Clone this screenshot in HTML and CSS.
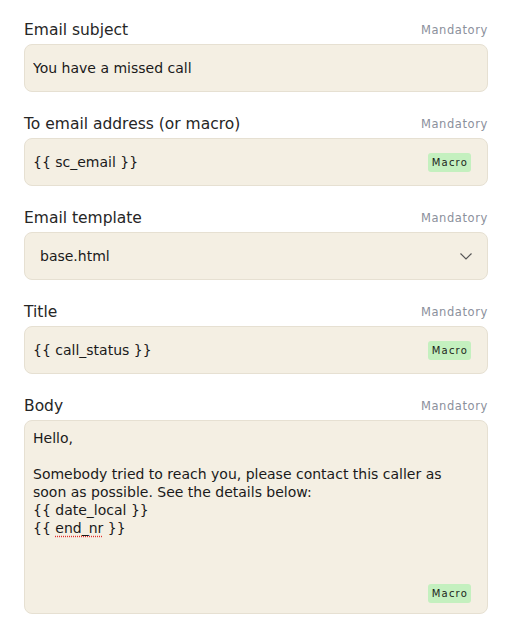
FILE: index.html
```html
<!DOCTYPE html>
<html lang="en">
  <head>
    <meta charset="UTF-8" />
    <meta name="viewport" content="width=device-width, initial-scale=1.0" />
    <title>Email notification</title>
    <link rel="stylesheet" href="styles.css">
  </head>
  <body>
    <form class="email-form">
      <div class="field">
        <div class="field-head">
          <label for="subject">Email subject</label>
          <span class="req">Mandatory</span>
        </div>
        <div class="box">
          <input id="subject" type="text" value="You have a missed call" />
        </div>
      </div>

      <div class="field">
        <div class="field-head">
          <label for="toAddr">To email address (or macro)</label>
          <span class="req">Mandatory</span>
        </div>
        <div class="box">
          <input id="toAddr" type="text" value="{{ sc_email }}" />
          <span class="macro">Macro</span>
        </div>
      </div>

      <div class="field">
        <div class="field-head">
          <label for="template">Email template</label>
          <span class="req">Mandatory</span>
        </div>
        <div class="box select-box">
          <select id="template">
            <option>base.html</option>
          </select>
          <svg class="chevron" width="14" height="14" viewBox="0 0 14 14">
            <path d="M1.5 4.5 L7 10 L12.5 4.5" fill="none" stroke="#555" stroke-width="1.2" />
          </svg>
        </div>
      </div>

      <div class="field">
        <div class="field-head">
          <label for="title">Title</label>
          <span class="req">Mandatory</span>
        </div>
        <div class="box">
          <input id="title" type="text" value="{{ call_status }}" />
          <span class="macro">Macro</span>
        </div>
      </div>

      <div class="field">
        <div class="field-head">
          <label for="body">Body</label>
          <span class="req">Mandatory</span>
        </div>
        <div class="box body-box">
          <div class="body-text" id="body">Hello,<br><br>Somebody tried to reach you, please contact this caller as soon as possible. See the details below:<br>{{ date_local }}<br>{{ <span class="typo">end_nr</span> }}</div>
          <span class="macro">Macro</span>
        </div>
      </div>
    </form>
  </body>
</html>
```

FILE: styles.css
```css
body {
  margin: 0;
  background: #fff;
  color: #1a1a1a;
  font-family: "DejaVu Sans", sans-serif;
}
.email-form {
  padding: 18px 32px 0 24px;
  display: flex;
  flex-direction: column;
  gap: 20px;
}
.field-head {
  display: flex;
  justify-content: space-between;
  align-items: center;
  height: 24px;
  margin-bottom: 2px;
}
.field-head label {
  font-size: 15.5px;
  color: #262626;
}
.req {
  font-size: 11.5px;
  color: #8b909c;
  letter-spacing: 0.6px;
}
.box {
  display: flex;
  align-items: center;
  height: 48px;
  box-sizing: border-box;
  background: #f4efe3;
  border: 1px solid #e6e0d2;
  border-radius: 8px;
  padding: 0 16px 0 8px;
}
.box input,
.box select {
  flex: 1;
  border: none;
  background: transparent;
  font: inherit;
  font-size: 14px;
  color: #1a1a1a;
  outline: none;
  padding: 0;
}
.select-box {
  padding: 0 14px 0 15px;
}
.select-box select {
  appearance: none;
  -webkit-appearance: none;
}
.macro {
  background: #c4f0bf;
  color: #1c261b;
  font-size: 10px;
  letter-spacing: 1.2px;
  padding: 3px 3px 2px 4px;
  border-radius: 3px;
  line-height: 14px;
}
.body-box {
  height: 194px;
  flex-direction: column;
  align-items: stretch;
  padding: 8px 16px 10px 8px;
}
.body-text {
  flex: 1;
  font-size: 14px;
  line-height: 18px;
  color: #1a1a1a;
}
.body-box .macro {
  align-self: flex-end;
}
.typo {
  text-decoration-line: underline;
  text-decoration-style: dotted;
  text-decoration-color: #e03030;
  text-underline-offset: 3px;
}
```
